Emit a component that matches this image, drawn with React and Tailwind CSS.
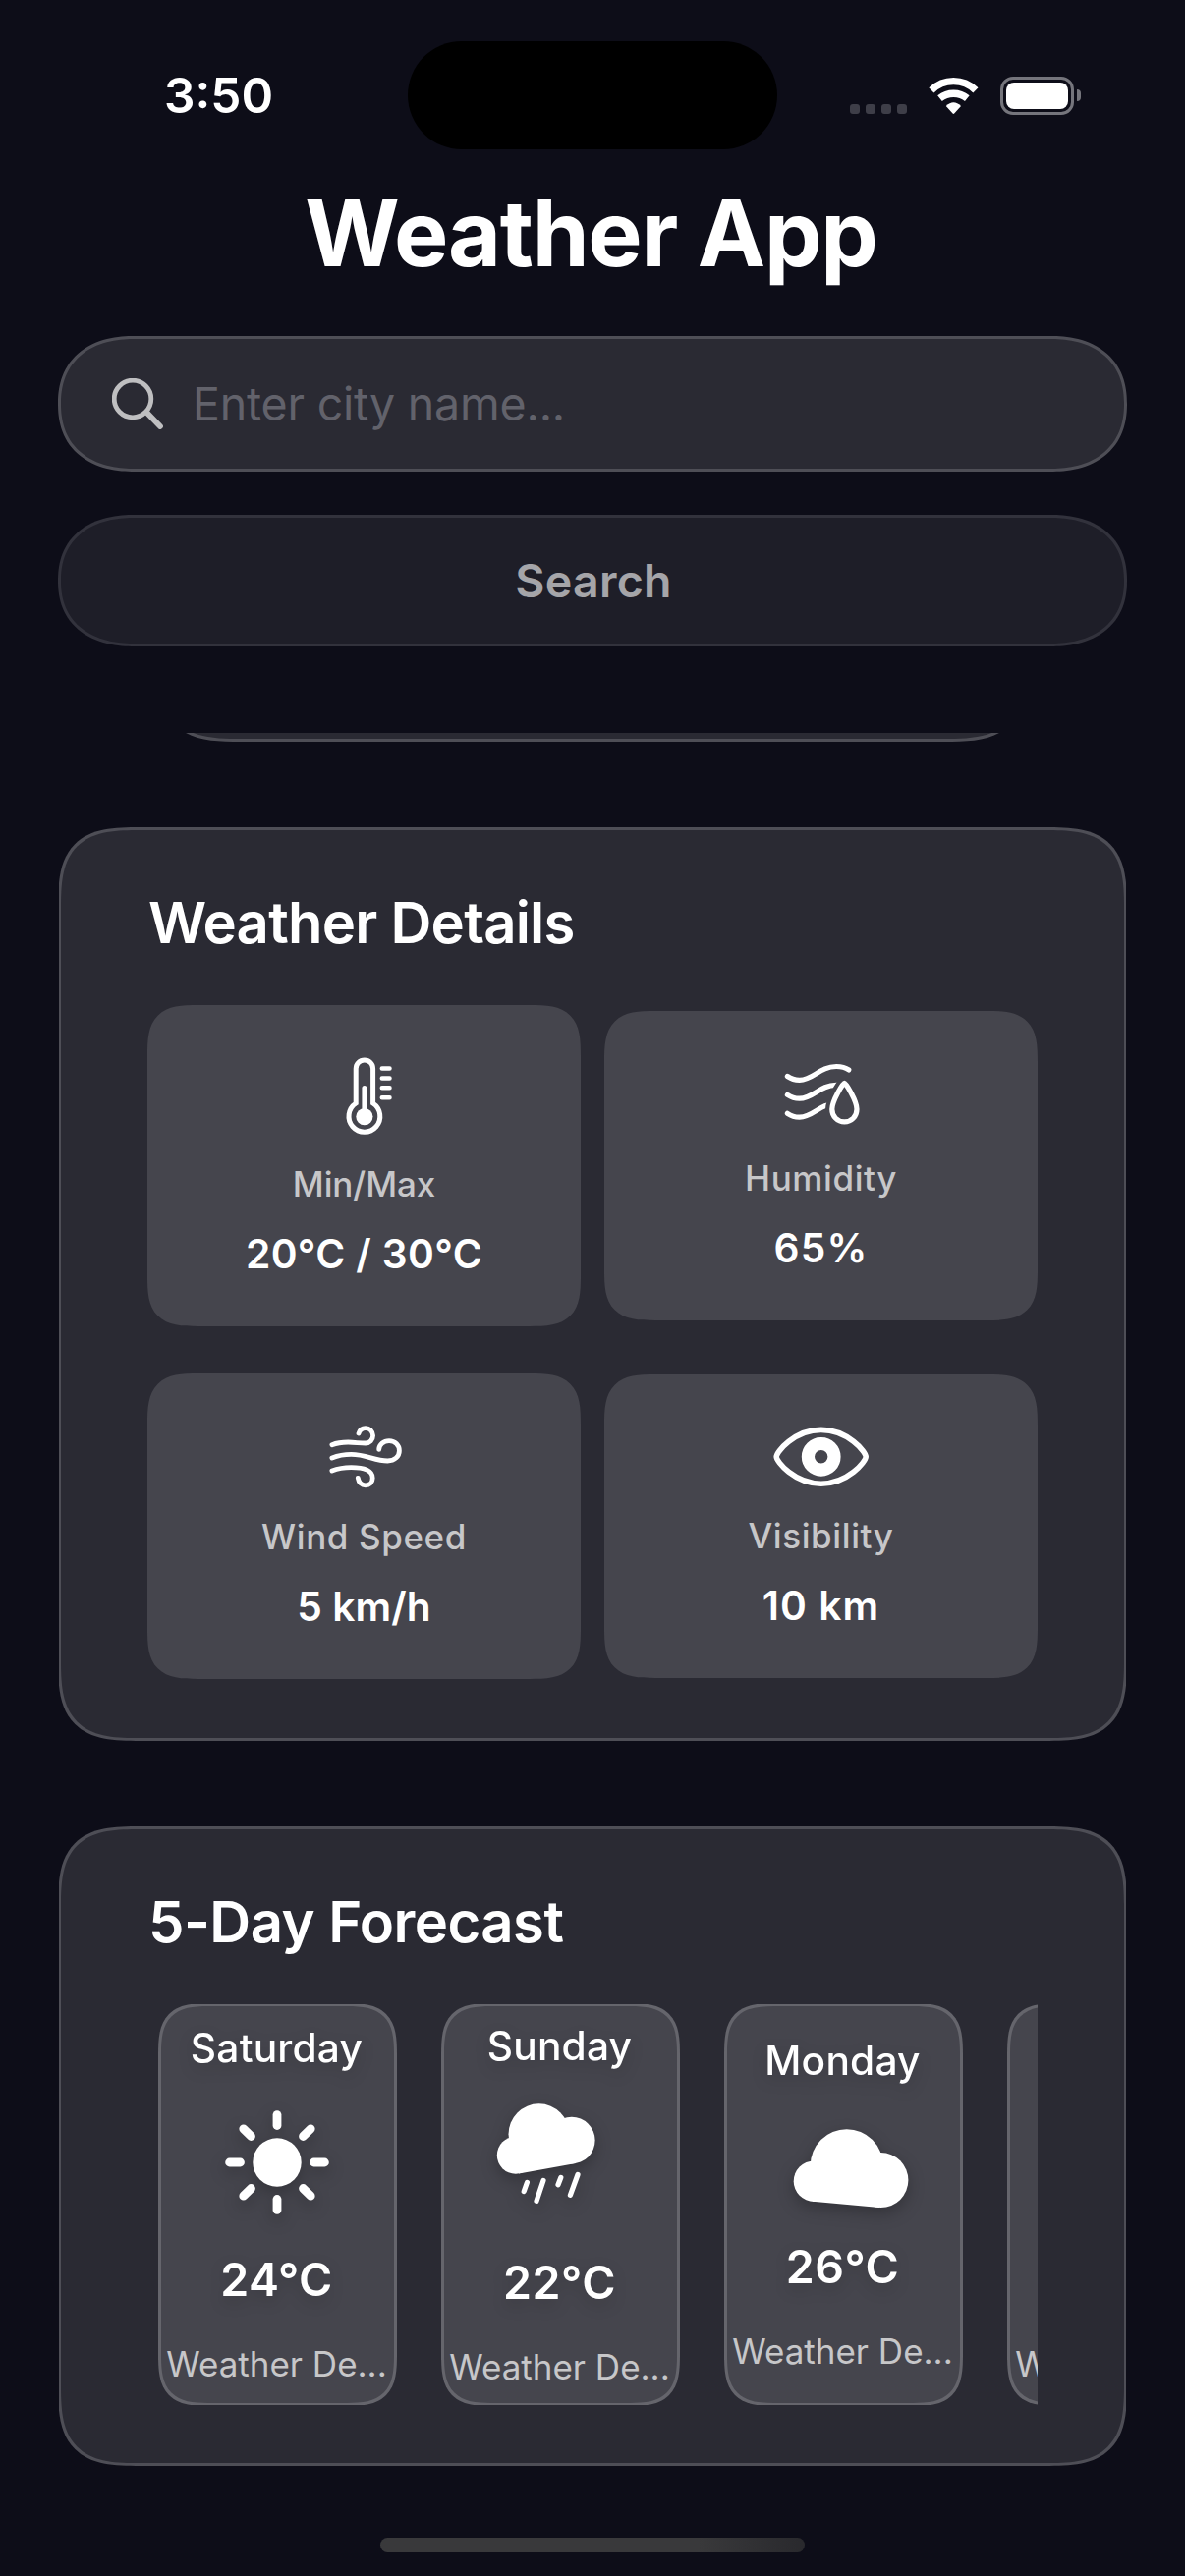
import React from "react";

const CARD =
  "shrink-0 rounded-[60px] border-[3px] border-[#4e4e56] bg-[#2a2a33] supports-[corner-shape:squircle]:rounded-[84px] [corner-shape:superellipse(1.6)]";

function StatusBar() {
  return (
    <div className="mt-[42px] grid h-[110px] shrink-0 grid-cols-[415px_376px_415px] items-center">
      <div className="pl-[167px] text-[49.5px] leading-[60px] font-semibold">3:50</div>
      <div className="h-full rounded-full bg-black" />
      <div className="flex items-center pl-[74px]">
        <div className="mt-[28px] flex gap-[6px]">
          {[0, 1, 2, 3].map((i) => (
            <div key={i} className="size-[10px] rounded-[3px] bg-[#3e3e48]" />
          ))}
        </div>
        <svg className="ml-[22px] h-[37px] w-[51px]" viewBox="0 0 51 37" fill="none" stroke="#fff" strokeWidth="7.3">
          <path d="M2.9 12.9A32 32 0 0 1 47.9 12.9" />
          <path d="M11.5 21.2A22 22 0 0 1 39.3 21.2" />
          <path d="M17.8 28.9Q25.4 21.4 33 28.9L26.2 36.5Q25.4 37.3 24.6 36.5Z" fill="#fff" stroke="none" />
        </svg>
        <div className="ml-[22px] h-[39px] w-[75px] rounded-[13px] border-[3px] border-[#75757c] p-[3px]">
          <div className="h-full rounded-[8px] bg-white" />
        </div>
        <div className="ml-[3px] h-[12px] w-[4px] rounded-r-full bg-[#75757c]" />
      </div>
    </div>
  );
}

function Thermometer() {
  return (
    <svg className="h-[90px] w-[100px]" viewBox="0 0 100 90" fill="none" stroke="#fff" strokeWidth="5" strokeLinecap="round">
      <path d="M41.2 52V16.7A8.7 8.7 0 0 1 58.6 16.7V52A15.9 15.9 0 1 1 41.2 52Z" />
      <path d="M49.9 36.4V60" />
      <circle cx="49.9" cy="65.6" r="8.6" fill="#fff" stroke="none" />
      <path d="M67.8 16.6H75.5M67.8 26.5H75.5M67.8 36.3H75.5M67.8 46.2H75.5" strokeWidth="4.5" />
    </svg>
  );
}

const DROP =
  "M73.4 25.4C72 25.4 60.8 43.5 60.8 52C60.8 59.5 66.4 64.9 73.4 64.9C80.4 64.9 86 59.5 86 52C86 43.5 74.8 25.4 73.4 25.4Z";

function Humidity() {
  return (
    <svg className="h-[78px] w-[100px]" viewBox="0 0 100 78" fill="none" stroke="#fff" strokeWidth="5.2" strokeLinecap="round">
      <mask id="drop-gap" maskUnits="userSpaceOnUse" x="0" y="0" width="100" height="78">
        <rect width="100" height="78" fill="#fff" stroke="none" />
        <path d={DROP} fill="#000" stroke="#000" strokeWidth="13.5" strokeLinejoin="round" />
      </mask>
      <path d="M15.4 18.5C19 21 23 22.3 27.7 22.3C42 22.3 48 8.5 65.2 8.5C70 8.5 74.5 9.6 77.8 11.9" />
      <g mask="url(#drop-gap)">
        <path d="M15.4 37.4C19 39.9 23 41.2 27.7 41.2C42 41.2 48 27.4 65.2 27.4" />
        <path d="M15.4 56.3C19 58.8 23 60.1 27.7 60.1C42 60.1 48 46.3 65.2 46.3" />
      </g>
      <path d={DROP} strokeLinejoin="round" />
    </svg>
  );
}

function Wind() {
  return (
    <svg className="h-[74px] w-[100px]" viewBox="0 0 100 74" fill="none" stroke="#fff" strokeWidth="4.8" strokeLinecap="round">
      <path d="M16.9 24.7C22 22.6 28 22 33.3 22C40 22 45 23 51 23C55.3 23 58.6 19.6 58.6 15.3C58.6 11 55.2 7.7 51 7.7C47.6 7.7 45 9.8 44 13" />
      <path d="M16.9 38C23 35.6 29.5 34.4 36.4 34.4C52 34.4 60 41 73.5 41C80.5 41 85.4 36.5 85.4 30.7C85.4 25 81 20.7 75 20.7C69.3 20.7 65 24.3 64.7 29.3" />
      <path d="M16.9 51C23 48.6 29.5 47.6 36.4 47.6C50 47.6 58.2 50.8 58.2 58.5C58.2 63 55 65.8 51 65.8C47 65.8 44 63 43.3 58.3" />
    </svg>
  );
}

function Eye() {
  return (
    <svg className="h-[72px] w-[100px]" viewBox="0 0 100 72" fill="none" stroke="#fff">
      <path d="M4.2 35.8C4.2 31 22.5 8.4 49.7 8.4S95.2 31 95.2 35.8S76.9 63.2 49.7 63.2S4.2 40.6 4.2 35.8Z" strokeWidth="5.6" />
      <circle cx="49.7" cy="35.8" r="13.3" strokeWidth="13.2" />
    </svg>
  );
}

function DetailTile({ icon, label, value, labelClass = "tracking-[0.6px]", valueClass = "tracking-[0.4px]" }) {
  return (
    <div className="flex flex-col items-center rounded-[36px] bg-[#45454d] py-12 supports-[corner-shape:squircle]:rounded-[52px] [corner-shape:superellipse(1.6)]">
      {icon}
      <div className={`mt-[23px] text-[35px] leading-[42px] font-medium text-[#c7c7c9] ${labelClass}`}>{label}</div>
      <div className={`mt-[25px] text-[40.7px] leading-[51px] font-semibold ${valueClass}`}>{value}</div>
    </div>
  );
}

function Sun() {
  return (
    <svg className="h-[110px] w-[120px] overflow-visible" viewBox="-60 -55 120 110" stroke="#fff" strokeWidth="8.8" strokeLinecap="round">
      <circle r="24.7" fill="#fff" stroke="none" />
      {[0, 45, 90, 135, 180, 225, 270, 315].map((a) => (
        <path key={a} d="M37.5 0H48.4" transform={`rotate(${a})`} />
      ))}
    </svg>
  );
}

function Rain() {
  return (
    <svg className="h-[115px] w-[120px] overflow-visible" viewBox="0 0 120 115" fill="#fff">
      <circle cx="14.8" cy="49.7" r="19" />
      <circle cx="38.5" cy="28.3" r="31" />
      <circle cx="71.8" cy="34.6" r="23.8" />
      <path d="M14.8 49.7L38.5 28.3L71.8 34.6L76 58L18 68.4Z" />
      <path
        d="M26.4 77.5L23.2 86.5M43 75.5L36 96.4M60.8 72.5L58 79.8M78 69.5L70.4 90.3"
        stroke="#fff"
        strokeWidth="5.2"
        strokeLinecap="round"
      />
    </svg>
  );
}

function Cloud() {
  return (
    <svg className="h-[84px] w-[120px] overflow-visible" viewBox="0 0 120 84" fill="#fff">
      <circle cx="30.4" cy="61.2" r="20.7" />
      <circle cx="63.7" cy="45.2" r="37" />
      <circle cx="98.4" cy="60.1" r="28" />
      <path d="M30.4 61.2L63.7 45.2L98.4 60.1L97 88.1L28.8 81.8Z" />
    </svg>
  );
}

function DayCard({ day, icon, temp }) {
  return (
    <div className="-my-px flex w-[243px] shrink-0 flex-col items-center justify-center gap-9 rounded-[36px] border-[3px] border-[#65656c] bg-[#45454d] pr-[2px] pb-[2px] whitespace-nowrap supports-[corner-shape:squircle]:rounded-[54px] [corner-shape:superellipse(1.6)]">
      <div className="h-[51px] text-[40.7px] leading-[51px] font-medium tracking-[0.2px] drop-shadow-[0_6px_8px_rgba(0,0,0,0.15)]">{day}</div>
      <div className="drop-shadow-[0_6px_8px_rgba(0,0,0,0.25)]">{icon}</div>
      <div className="h-[57px] text-[46.5px] leading-[57px] font-semibold tracking-[0.5px] drop-shadow-[0_6px_8px_rgba(0,0,0,0.15)]">{temp}</div>
      <div className="text-[35px] leading-[42px] text-[#c7c7c9]">Weather De...</div>
    </div>
  );
}

const HEADING = "pl-px text-[58px] leading-[72px] font-semibold";

export default function App() {
  return (
    <div className="relative flex h-[2622px] w-[1206px] flex-col overflow-hidden bg-[#0d0d18] font-['Inter',sans-serif] text-white antialiased">
      <StatusBar />
      <h1 className="mt-[29px] shrink-0 pr-[3px] text-center text-[93px] leading-[112px] font-bold tracking-[-1.27px]">Weather App</h1>

      <div className="mx-[59px] mt-[49px] flex h-[138px] shrink-0 items-center rounded-full border-[3px] border-[#4e4e56] bg-[#2a2a33] pl-[52px] supports-[corner-shape:squircle]:rounded-[78px/69px] [corner-shape:superellipse(1.2)]">
        <svg className="size-[52px]" viewBox="0 0 52 52" fill="none" stroke="#bfbfc1" strokeLinecap="round">
          <circle cx="21" cy="21" r="18.8" strokeWidth="4.8" />
          <path d="M36 35.5L49 49" strokeWidth="5.8" />
        </svg>
        <span className="ml-[30px] text-[46.5px] leading-[58px] tracking-[-0.2px] text-[#62626b]">Enter city name...</span>
      </div>

      <button className="mx-[59px] mt-[44px] h-[134px] shrink-0 rounded-full border-[3px] border-[#32323c] bg-[#1e1e28] pl-[2px] text-[46.5px] leading-[58px] font-semibold tracking-[0.3px] text-[#a5a5a9] supports-[corner-shape:squircle]:rounded-[78px/67px] [corner-shape:superellipse(1.2)]">
        Search
      </button>

      <main className="mx-[60px] mt-[88px] flex flex-1 flex-col gap-[87px] overflow-hidden">
        <section className={`${CARD} mx-[101px] -mt-[291px] h-[300px]`} />

        <section className={`${CARD} -mx-px px-[88px] pt-[58px] pb-[60px]`}>
          <h2 className={`${HEADING} tracking-[-0.75px]`}>Weather Details</h2>
          <div className="mt-12 grid grid-cols-2 items-center gap-x-6 gap-y-12">
            <DetailTile icon={<Thermometer />} label="Min/Max" value="20°C / 30°C" labelClass="tracking-[-0.1px]" />
            <DetailTile icon={<Humidity />} label="Humidity" value="65%" valueClass="tracking-[1.2px]" />
            <DetailTile icon={<Wind />} label="Wind Speed" value="5 km/h" valueClass="tracking-[0.1px]" />
            <DetailTile icon={<Eye />} label="Visibility" value="10 km" valueClass="tracking-[1.1px]" />
          </div>
        </section>

        <section className={`${CARD} -mx-px px-[88px] pt-[58px] pb-[59px]`}>
          <h2 className={`${HEADING} tracking-[-0.55px]`}>5-Day Forecast</h2>
          <div className="mt-12 flex h-[408px] gap-[45px] overflow-hidden pl-[11px]">
            <DayCard day="Saturday" icon={<Sun />} temp="24°C" />
            <DayCard day="Sunday" icon={<Rain />} temp="22°C" />
            <DayCard day="Monday" icon={<Cloud />} temp="26°C" />
            <DayCard day="" icon={<Sun />} temp="" />
          </div>
        </section>
      </main>

      <div className="absolute bottom-[24px] left-[387px] h-[15px] w-[432px] rounded-full bg-linear-to-r from-[#39393b] via-[#39393b] via-75% to-[#29292d]" />
    </div>
  );
}
